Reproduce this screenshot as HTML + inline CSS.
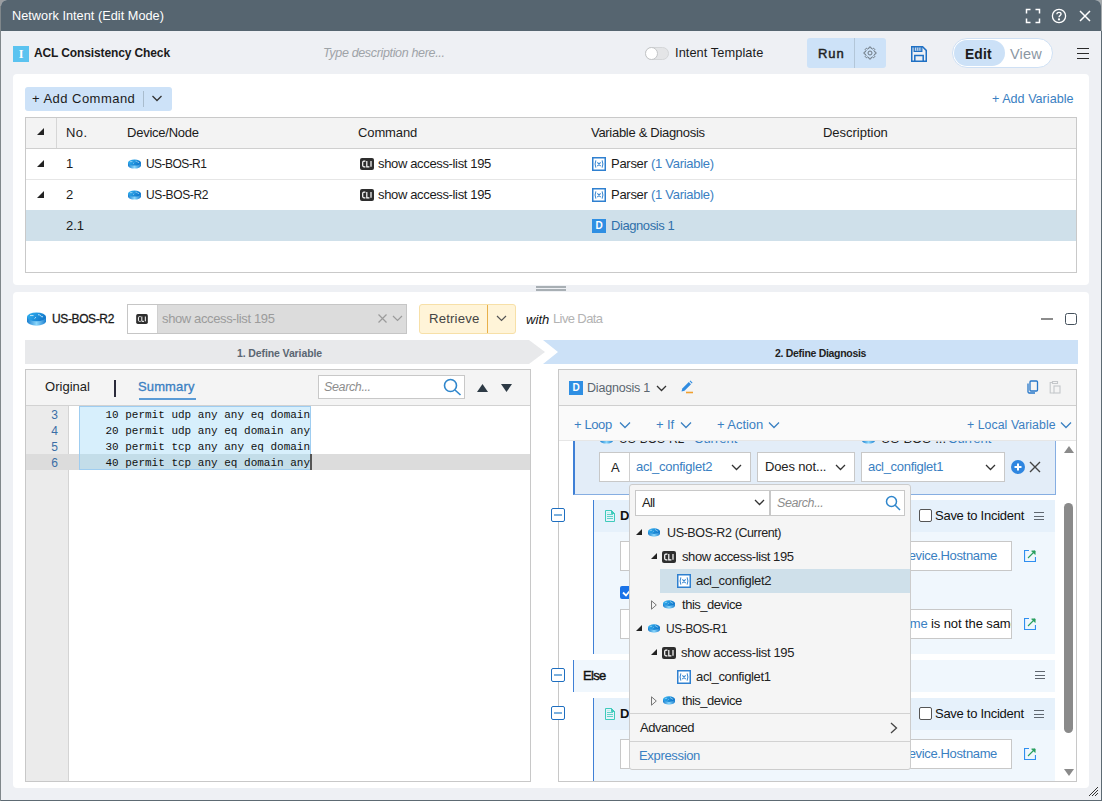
<!DOCTYPE html>
<html><head><meta charset="utf-8">
<style>
*{box-sizing:border-box;margin:0;padding:0}
html,body{width:1102px;height:801px;overflow:hidden;background:#5d6a73;font-family:"Liberation Sans",sans-serif;font-size:13px;color:#1b1b1b}
.a{position:absolute}
.t{position:absolute;white-space:nowrap;line-height:18px;font-size:13px}
#dlg{position:absolute;left:1px;top:0;width:1100px;height:800px;background:#eef0f4;border-radius:6px 6px 0 0;overflow:hidden}
#title{position:absolute;left:0;top:0;width:1100px;height:31px;background:#566570}
.blue{color:#3a80c2}
.tri{position:absolute;width:0;height:0;border-style:solid;border-width:0 0 7px 7px;border-color:transparent transparent #222 transparent}
.rtr{position:absolute;border-radius:50%/45%;background:radial-gradient(ellipse at 50% 30%,#8fd3fa 0,#3fa9ea 45%,#1d84cf 100%)}
.cli{position:absolute;width:14px;height:12px;background:#2f2f2f;border-radius:2px;color:#fff;font-size:7.5px;font-weight:bold;line-height:12px;text-align:center;letter-spacing:-0.3px}
.xic{position:absolute;width:14px;height:14px;border:1.5px solid #3182cf;color:#3182cf;font-size:8px;font-style:italic;line-height:11px;text-align:center;font-family:"Liberation Serif",serif}
.dic{position:absolute;width:14px;height:14px;background:#2f8fe3;color:#fff;font-size:10px;font-weight:bold;line-height:14px;text-align:center}
.btnb{position:absolute;background:#cde2f8;border-radius:3px}
</style></head><body>
<svg width="0" height="0" style="position:absolute">
  <defs>
    <linearGradient id="rgs" x1="0" x2="1" y1="0" y2="0"><stop offset="0" stop-color="#1a7fd0"/><stop offset="0.5" stop-color="#8ad6fb"/><stop offset="1" stop-color="#1a7fd0"/></linearGradient>
    <linearGradient id="rgt" x1="0" x2="1" y1="0" y2="0.4"><stop offset="0" stop-color="#35b6f3"/><stop offset="1" stop-color="#1279cc"/></linearGradient>
    <symbol id="rt" viewBox="0 0 19 13.5">
      <path d="M0 4.6V8.9A9.5 4.5 0 0 0 19 8.9V4.6Z" fill="url(#rgs)"/>
      <ellipse cx="9.5" cy="4.6" rx="9.5" ry="4.4" fill="url(#rgt)"/>
      <path d="M3 3.3H6.5M7.5 6.2L9 5M11 2.5H12.5L14.5 4.5H16" stroke="#cfeaf8" stroke-width="0.9" fill="none"/>
    </symbol>
<symbol id="cl" viewBox="0 0 14 12"><rect x="0" y="0" width="14" height="12" rx="2" fill="#2e2e2e"/><path d="M5.4 3.2H3.9Q2.7 3.2 2.7 4.4V7.6Q2.7 8.8 3.9 8.8H5.4M6.8 3V8.8H9.4M11 3V8.8" stroke="#fff" stroke-width="1.2" fill="none"/></symbol>
<symbol id="xv" viewBox="0 0 14 14"><rect x=".75" y=".75" width="12.5" height="12.5" fill="#fff" stroke="#2f80d0" stroke-width="1.5"/><path d="M3.9 3.4Q2.3 7 3.9 10.6M10.1 3.4Q11.7 7 10.1 10.6M5.4 5.3L8.6 9.1M8.6 5.3L5.4 9.1" stroke="#3a88d2" stroke-width="1.1" fill="none"/></symbol>
  </defs></svg>
<div class="a" style="left:0;top:0;width:1px;height:801px;background:#80878b"></div>
<div class="a" style="left:0;top:0;width:14px;height:6px;background:#9a9da0"></div>
<div class="a" style="left:1088px;top:0;width:14px;height:31px;background:#a3a9ac"></div>
<div id="dlg">
  <div id="title">
    <div id="t1" class="t" style="left:11px;top:7px;color:#fff;font-size:12.7px;letter-spacing:0.04px">Network Intent (Edit Mode)</div>
    <!-- fullscreen -->
    <svg class="a" style="left:1024px;top:8px" width="16" height="16" viewBox="0 0 16 16" fill="none" stroke="#fff" stroke-width="1.5">
      <path d="M1.5 5.5V1.5H5.5M10.5 1.5H14.5V5.5M14.5 10.5V14.5H10.5M5.5 14.5H1.5V10.5"/></svg>
    <!-- help -->
    <svg class="a" style="left:1050px;top:8px" width="16" height="16" viewBox="0 0 16 16" fill="none" stroke="#fff" stroke-width="1.3">
      <circle cx="8" cy="8" r="6.6"/><path d="M5.9 6.2C5.9 5 6.8 4.3 8 4.3 9.2 4.3 10.1 5 10.1 6.1 10.1 7.4 8 7.6 8 9.2"/><circle cx="8" cy="11.4" r="0.5" fill="#fff"/></svg>
    <!-- close -->
    <svg class="a" style="left:1078px;top:10px" width="12" height="12" viewBox="0 0 12 12" fill="none" stroke="#fff" stroke-width="1.5">
      <path d="M1 1L11 11M11 1L1 11"/></svg>
  </div>

  <!-- header row -->
  <div class="dic" style="left:12px;top:46px;width:16px;height:16px;background:#5bc3f0;font-family:'Liberation Serif',serif;font-size:12px;line-height:16px">I</div>
  <div id="t2" class="t" style="left:33px;top:44px;font-weight:bold;font-size:12px;letter-spacing:-0.12px">ACL Consistency Check</div>
  <div id="t3" class="t" style="left:322px;top:44px;font-style:italic;color:#9ea3a8;font-size:12.5px;letter-spacing:-0.34px">Type description here...</div>
  <div class="a" style="left:644px;top:47px;width:24px;height:13px;border-radius:7px;background:#e4e5e7;border:1px solid #d4d6d8"></div>
  <div class="a" style="left:644px;top:47px;width:13px;height:13px;border-radius:50%;background:#fff;border:1px solid #c3c5c7"></div>
  <div id="t4" class="t" style="left:674px;top:44px;font-size:12.8px;letter-spacing:0.07px">Intent Template</div>
  <div class="btnb" style="left:806px;top:38px;width:79px;height:30px"></div>
  <div class="a" style="left:853px;top:38px;width:1px;height:30px;background:#b3c6d8"></div>
  <div id="t5" class="t" style="left:817px;top:45px;font-weight:normal;-webkit-text-stroke:0.45px #222;font-size:13px;color:#222;letter-spacing:0.9px">Run</div>
  <svg class="a" style="left:861px;top:45px" width="16" height="16" viewBox="0 0 16 16" fill="none" stroke="#6b7680" stroke-width="1" stroke-linejoin="round"><path d="M12.34 6.20 L12.59 6.97 L13.94 7.15 L13.94 8.85 L12.59 9.03 L12.34 9.80 L11.97 10.52 L12.80 11.60 L11.60 12.80 L10.52 11.97 L9.80 12.34 L9.03 12.59 L8.85 13.94 L7.15 13.94 L6.97 12.59 L6.20 12.34 L5.48 11.97 L4.40 12.80 L3.20 11.60 L4.03 10.52 L3.66 9.80 L3.41 9.03 L2.06 8.85 L2.06 7.15 L3.41 6.97 L3.66 6.20 L4.03 5.48 L3.20 4.40 L4.40 3.20 L5.48 4.03 L6.20 3.66 L6.97 3.41 L7.15 2.06 L8.85 2.06 L9.03 3.41 L9.80 3.66 L10.52 4.03 L11.60 3.20 L12.80 4.40 L11.97 5.48Z"/><circle cx="8" cy="8" r="2"/></svg>
  <svg class="a" style="left:910px;top:46px" width="16" height="16" viewBox="0 0 16 16" fill="none" stroke="#1f70c4">
    <path d="M.75.75H11.6L15.25 4.4V15.25H.75Z" stroke-width="1.5"/><path d="M3.2 1V5.3H10.8V1" stroke-width="1.3"/><path d="M5.3 1.2V4.8M7.2 1.2V4.8M9.1 1.2V4.8" stroke-width="0.9"/><path d="M3.8 15V9.4H12.2V15" stroke-width="1.5"/></svg>
  <div class="a" style="left:951px;top:38px;width:101px;height:30px;border-radius:15px;background:#fff;border:1px solid #cfe0f4"></div>
  <div class="a" style="left:953px;top:40px;width:51px;height:26px;border-radius:13px;background:#cce1f7"></div>
  <div id="t6" class="t" style="left:964px;top:46px;font-weight:bold;font-size:13.8px;color:#1b1b1b;letter-spacing:0.14px">Edit</div>
  <div id="t7" class="t" style="left:1009px;top:45px;font-size:14.5px;color:#8b97a3;letter-spacing:0.17px">View</div>
  <div class="a" style="left:1076px;top:47.5px;width:12px;height:1.5px;background:#2a2a2a"></div>
  <div class="a" style="left:1076px;top:52.5px;width:12px;height:1.5px;background:#2a2a2a"></div>
  <div class="a" style="left:1076px;top:57.5px;width:12px;height:1.5px;background:#2a2a2a"></div>

  <!-- top panel -->
  <div class="a" style="left:12px;top:74px;width:1076px;height:211px;background:#fff;border-radius:4px"></div>
  <div class="btnb" style="left:24px;top:87px;width:147px;height:24px"></div>
  <div id="t8" class="t" style="left:31px;top:90px;font-size:13px;letter-spacing:0.47px">+ Add Command</div>
  <div class="a" style="left:142px;top:91px;width:1px;height:16px;background:#a9bccd"></div>
  <svg class="a" style="left:150px;top:94px" width="12" height="9" viewBox="0 0 12 9" fill="none" stroke="#333" stroke-width="1.3"><path d="M1.5 2L6 6.5 10.5 2"/></svg>
  <div id="t9" class="t blue" style="left:991px;top:90px;font-size:12.6px;letter-spacing:0.01px">+ Add Variable</div>

  <div id="tbl" class="a" style="left:24px;top:117px;width:1052px;height:156px;border:1px solid #c9c9c9;background:#fff">
    <div class="a" style="left:0;top:0;width:1050px;height:31px;background:#f3f3f3;border-bottom:1px solid #cfcfcf"></div>
    <div class="a" style="left:30px;top:0;width:1px;height:30px;background:#d6d6d6"></div>
    <div id="t10" class="tri" style="left:11px;top:10px"></div>
    <div id="t11" class="t" style="left:40px;top:6px;letter-spacing:0.4px">No.</div>
    <div id="t12" class="t" style="left:101px;top:6px;letter-spacing:-0.24px">Device/Node</div>
    <div id="t13" class="t" style="left:332px;top:6px;letter-spacing:-0.12px">Command</div>
    <div id="t14" class="t" style="left:565px;top:6px;letter-spacing:-0.3px">Variable &amp; Diagnosis</div>
    <div id="t15" class="t" style="left:797px;top:6px;letter-spacing:-0.02px">Description</div>
    <!-- row1 -->
    <div class="a" style="left:0;top:61px;width:1050px;height:1px;background:#e6e6e6"></div>
    <div id="t16" class="tri" style="left:11px;top:42px"></div>
    <div id="t17" class="t" style="left:40px;top:37px">1</div>
    <svg class="a" style="left:102px;top:41px" width="13" height="10"><use href="#rt"/></svg>
    <div id="t18" class="t" style="left:120px;top:37px;letter-spacing:-0.56px;font-size:12px">US-BOS-R1</div>
    <svg class="a" style="left:334px;top:40px" width="14" height="12"><use href="#cl"/></svg>
    <div id="t19" class="t" style="left:352px;top:37px;letter-spacing:-0.35px">show access-list 195</div>
    <svg class="a" style="left:566px;top:39px" width="14" height="14"><use href="#xv"/></svg>
    <div id="t20" class="t" style="left:585px;top:37px;letter-spacing:-0.28px">Parser <span class="blue">(1 Variable)</span></div>
    <!-- row2 -->
    <div id="t21" class="tri" style="left:11px;top:73px"></div>
    <div id="t22" class="t" style="left:40px;top:68px">2</div>
    <svg class="a" style="left:102px;top:72px" width="13" height="10"><use href="#rt"/></svg>
    <div id="t23" class="t" style="left:120px;top:68px;letter-spacing:-0.36px;font-size:12px">US-BOS-R2</div>
    <svg class="a" style="left:334px;top:71px" width="14" height="12"><use href="#cl"/></svg>
    <div id="t24" class="t" style="left:352px;top:68px;letter-spacing:-0.35px">show access-list 195</div>
    <svg class="a" style="left:566px;top:70px" width="14" height="14"><use href="#xv"/></svg>
    <div id="t25" class="t" style="left:585px;top:68px;letter-spacing:-0.28px">Parser <span class="blue">(1 Variable)</span></div>
    <!-- row 2.1 -->
    <div class="a" style="left:0;top:92px;width:1050px;height:31px;background:#cfe0ea"></div>
    <div id="t26" class="t" style="left:40px;top:99px">2.1</div>
    <div class="dic" style="left:566px;top:101px">D</div>
    <div id="t27" class="t" style="left:585px;top:99px;color:#2f70aa;letter-spacing:-0.42px">Diagnosis 1</div>
  </div>

  <!-- splitter -->
  <div class="a" style="left:535px;top:286px;width:30px;height:2px;background:#a8afb4"></div>
  <div class="a" style="left:535px;top:289px;width:30px;height:2px;background:#a8afb4"></div>

  <!-- bottom panel -->
  <div id="bp" class="a" style="left:12px;top:292px;width:1076px;height:496px;background:#fff;border-radius:4px 4px 4px 4px">
  </div>
  <!-- ===== bottom header ===== -->
  <svg class="a" style="left:26px;top:312px" width="19" height="14"><use href="#rt"/></svg>
  <div id="t28" class="t" style="left:51px;top:310px;font-size:12px;font-weight:normal;color:#1a1a1a;letter-spacing:-0.38px;-webkit-text-stroke:0.3px #1a1a1a">US-BOS-R2</div>
  <div class="a" style="left:126px;top:304px;width:280px;height:30px;border:1px solid #c6c6c6;background:#dcdcdc"></div>
  <div class="a" style="left:127px;top:305px;width:30px;height:28px;background:#fff;border-right:1px solid #d0d0d0"></div>
  <svg class="a" style="left:135px;top:314px" width="12" height="10"><use href="#cl"/></svg>
  <div id="t29" class="t" style="left:161px;top:310px;color:#9b9b9b;letter-spacing:-0.37px">show access-list 195</div>
  <svg class="a" style="left:376px;top:313px" width="11" height="11" viewBox="0 0 11 11" fill="none" stroke="#9b9b9b" stroke-width="1.2"><path d="M1.5 1.5L9.5 9.5M9.5 1.5L1.5 9.5"/></svg>
  <svg class="a" style="left:391px;top:315px" width="11" height="7" viewBox="0 0 11 7" fill="none" stroke="#9b9b9b" stroke-width="1.2"><path d="M1 1L5.5 5.5 10 1"/></svg>
  <div class="a" style="left:418px;top:304px;width:97px;height:30px;border:1px solid #f7e0a8;background:#fff4d8;border-radius:3px"></div>
  <div class="a" style="left:486px;top:305px;width:1px;height:28px;background:#e8b04a"></div>
  <div id="t30" class="t" style="left:428px;top:310px;color:#444;font-size:13.2px;letter-spacing:0.16px">Retrieve</div>
  <svg class="a" style="left:495px;top:315px" width="11" height="7" viewBox="0 0 11 7" fill="none" stroke="#555" stroke-width="1.2"><path d="M1 1L5.5 5.5 10 1"/></svg>
  <div id="t31" class="t" style="left:525px;top:311px;font-style:italic;color:#111;letter-spacing:0.06px">with</div>
  <div id="t32" class="t" style="left:552px;top:310px;color:#b3b3b3;letter-spacing:-0.62px">Live Data</div>
  <div class="a" style="left:1040px;top:318px;width:12px;height:2px;background:#8c8c8c"></div>
  <div class="a" style="left:1064px;top:313px;width:12px;height:12px;border:1.5px solid #45515c;border-radius:2.5px"></div>

  <!-- step bar -->
  <svg class="a" style="left:24px;top:340px" width="1053" height="24" viewBox="0 0 1053 24">
    <path d="M0 0H504L520 12 504 24H0Z" fill="#e8e9eb"/>
    <path d="M518 0H1053V24H518L533 12Z" fill="#cce1f7"/>
  </svg>
  <div id="t33" class="t" style="left:236px;top:344px;font-size:10.5px;font-weight:bold;color:#5b6672;letter-spacing:-0.11px">1. Define Variable</div>
  <div id="t34" class="t" style="left:774px;top:344px;font-size:10.5px;font-weight:bold;color:#222;letter-spacing:-0.3px">2. Define Diagnosis</div>

  <!-- ===== left editor ===== -->
  <div class="a" style="left:24px;top:369px;width:506px;height:413px;border:1px solid #c8c8c8;background:#fff"></div>
  <div class="a" style="left:25px;top:370px;width:504px;height:36px;background:#f4f4f4;border-bottom:1px solid #d2d2d2"></div>
  <div id="t35" class="t" style="left:44px;top:378px;letter-spacing:0.02px">Original</div>
  <div class="a" style="left:113px;top:380px;width:1.6px;height:17px;background:#2a2a3a"></div>
  <div id="t36" class="t" style="left:137px;top:378px;color:#3a80c2;letter-spacing:0.13px;-webkit-text-stroke:0.3px #3a80c2">Summary</div>
  <div class="a" style="left:138px;top:398px;width:57px;height:2px;background:#5b9bd5"></div>
  <div class="a" style="left:317px;top:375px;width:147px;height:24px;border:1px solid #c8c8c8;background:#fff"></div>
  <div id="t37" class="t" style="left:323px;top:378px;font-style:italic;color:#8d8d8d;font-size:12.5px;letter-spacing:-0.37px">Search...</div>
  <svg class="a" style="left:442px;top:378px" width="19" height="18" viewBox="0 0 19 18" fill="none" stroke="#2f86cc" stroke-width="1.6"><circle cx="7.5" cy="7.5" r="6"/><path d="M12 12L17.5 17"/></svg>
  <svg class="a" style="left:476px;top:384px" width="11" height="8" viewBox="0 0 11 8"><path d="M0 8L5.5 0 11 8Z" fill="#2d3a45"/></svg>
  <svg class="a" style="left:500px;top:384px" width="11" height="8" viewBox="0 0 11 8"><path d="M0 0H11L5.5 8Z" fill="#2d3a45"/></svg>
  <!-- gutter -->
  <div class="a" style="left:25px;top:406px;width:43px;height:375px;background:#ebebeb;border-right:1px solid #d4d4d4"></div>
  <div class="a" style="left:25px;top:454px;width:504px;height:16px;background:#dcdcdc"></div>
  <div class="a" style="left:78px;top:406px;width:232px;height:64px;background:#d7effc;border:1px solid #9fcdf0"></div>
  <div class="a" style="left:79px;top:454px;width:230px;height:15px;background:#c3dde9"></div>
  <div class="a" style="left:309px;top:454px;width:2px;height:16px;background:#555"></div>
  <div class="a" style="left:25px;top:407px;width:32px;font-family:'Liberation Sans',sans-serif;font-size:12px;line-height:16px;color:#3a6ea6;text-align:right">3<br>4<br>5<br>6</div>
  <div class="a" style="left:78px;top:407px;font-family:'Liberation Mono',monospace;font-size:11px;line-height:16px;color:#111;white-space:pre">    10 permit udp any any eq domain
    20 permit udp any eq domain any
    30 permit tcp any any eq domain
    40 permit tcp any eq domain any</div>

  <!-- ===== right panel ===== -->
  <div class="a" style="left:557px;top:369px;width:519px;height:413px;border:1px solid #c8c8c8;background:#fff"></div>
  <!-- scroll content (clipped) -->
  <div id="sc" class="a" style="left:558px;top:441px;width:517px;height:340px;overflow:hidden;background:#fff">
    <!-- coordinates inside: page x - 559, page y - 441 -->
    <!-- condition block -->
    <div class="a" style="left:14px;top:-40px;width:483px;height:94px;background:#e3edf8;border-left:2px solid #3f80d6;border-right:1px solid #86aee2;border-bottom:1px solid #86aee2"></div>
    <svg class="a" style="left:41px;top:-7px" width="13" height="10"><use href="#rt"/></svg>
    <div id="t38" class="t" style="left:60px;top:-11px;color:#222;font-size:12px">US-BOS-R2</div>
    <div id="t39" class="t" style="left:122px;top:-11px;color:#222">-</div>
    <div id="t40" class="t" style="left:135px;top:-11px;color:#3a80c2">Current</div>
    <svg class="a" style="left:303px;top:-7px" width="13" height="10"><use href="#rt"/></svg>
    <div id="t41" class="t" style="left:322px;top:-11px;color:#222">US-BOS-...</div>
    <div id="t42" class="t" style="left:379px;top:-11px;color:#222">-</div>
    <div id="t43" class="t" style="left:389px;top:-11px;color:#3a80c2">Current</div>
    <div class="a" style="left:40px;top:11px;width:152px;height:30px;border:1px solid #c8c8c8;background:#fff"></div>
    <div class="a" style="left:70px;top:12px;width:1px;height:28px;background:#d0d0d0"></div>
    <div id="t44" class="t" style="left:52px;top:18px;color:#222">A</div>
    <div id="t45" class="t" style="left:77px;top:17px;color:#3a80c2;letter-spacing:-0.23px">acl_configlet2</div>
    <svg class="a" style="left:172px;top:23px" width="11" height="7" viewBox="0 0 11 7" fill="none" stroke="#333" stroke-width="1.3"><path d="M1 1L5.5 5.5 10 1"/></svg>
    <div class="a" style="left:198px;top:11px;width:98px;height:30px;border:1px solid #c8c8c8;background:#fff"></div>
    <div id="t46" class="t" style="left:206px;top:17px;color:#222;letter-spacing:-0.14px">Does not...</div>
    <svg class="a" style="left:276px;top:23px" width="11" height="7" viewBox="0 0 11 7" fill="none" stroke="#333" stroke-width="1.3"><path d="M1 1L5.5 5.5 10 1"/></svg>
    <div class="a" style="left:302px;top:11px;width:144px;height:30px;border:1px solid #c8c8c8;background:#fff"></div>
    <div id="t47" class="t" style="left:309px;top:17px;color:#3a80c2;letter-spacing:-0.31px">acl_configlet1</div>
    <svg class="a" style="left:426px;top:23px" width="11" height="7" viewBox="0 0 11 7" fill="none" stroke="#333" stroke-width="1.3"><path d="M1 1L5.5 5.5 10 1"/></svg>
    <svg class="a" style="left:452px;top:19px" width="14" height="14" viewBox="0 0 14 14"><circle cx="7" cy="7" r="7" fill="#2f86e0"/><path d="M7 3.5V10.5M3.5 7H10.5" stroke="#fff" stroke-width="2"/></svg>
    <svg class="a" style="left:470px;top:20px" width="12" height="12" viewBox="0 0 12 12" fill="none" stroke="#444" stroke-width="1.4"><path d="M1 1L11 11M11 1L1 11"/></svg>

    <!-- action block 1 -->
    <div class="a" style="left:34px;top:59px;width:462px;height:154px;background:#f0f7fd;border-left:1px solid #3f80d6"></div>
    <div class="a" style="left:35px;top:59px;width:461px;height:32px;background:#e6f1fb"></div>
    <svg class="a" style="left:46px;top:69px" width="10" height="12" viewBox="0 0 10 12" fill="none" stroke="#3ecbbb" stroke-width="1"><path d="M.5.5H6.5L9.5 3.5V11.5H.5Z"/><path d="M6.5.5V3.5H9.5Z" fill="#3ecbbb"/><path d="M2 4.5H8M2 6.5H8M2 8.5H8" stroke="#5fd3c6"/><path d="M2 2.5H5" stroke="#bfeee8"/></svg>
    <div id="t48" class="t" style="left:61px;top:66px;font-weight:bold;color:#111">Define</div>
    <div class="a" style="left:360px;top:68px;width:13px;height:13px;border:1px solid #555;border-radius:2px;background:#fff"></div>
    <div id="t49" class="t" style="left:376px;top:66px;color:#111;letter-spacing:-0.26px">Save to Incident</div>
    <div class="a" style="left:475px;top:71px;width:10px;height:1.2px;background:#5f6770"></div>
    <div class="a" style="left:475px;top:74.5px;width:10px;height:1.2px;background:#5f6770"></div>
    <div class="a" style="left:475px;top:78px;width:10px;height:1.2px;background:#5f6770"></div>
    <div class="a" style="left:61px;top:100px;width:392px;height:30px;border:1px solid #c8c8c8;background:#fff;overflow:hidden">
      <div id="t50" class="t" style="right:14px;top:5px;color:#3a80c2;letter-spacing:-0.35px">$this_device.Hostname</div>
    </div>
    <svg class="a" style="left:465px;top:109px" width="12" height="12" viewBox="0 0 12 12" fill="none" stroke-width="1.1"><path d="M5 .55H.55V11.45H11.45V7" stroke="#2f8ff0"/><path d="M4 8L11 1" stroke="#2aa05f"/><path d="M7.6.9H11.1V4.4Z" fill="#2aa05f" stroke="#2aa05f" stroke-width="0.8"/></svg>
    <div class="a" style="left:61px;top:145px;width:13px;height:13px;border-radius:2px;background:#1a73e8"></div>
    <svg class="a" style="left:63px;top:147px" width="10" height="9" viewBox="0 0 10 9" fill="none" stroke="#fff" stroke-width="1.8"><path d="M1 4.5L4 7.5 9 1.5"/></svg>
    <div class="a" style="left:61px;top:168px;width:392px;height:30px;border:1px solid #c8c8c8;background:#fff;overflow:hidden">
      <div id="t51" class="t" style="left:221px;top:5px;color:#111;letter-spacing:-0.1px"><span style="color:#3a80c2">$R1.Hostname</span> is not the same as</div>
    </div>
    <svg class="a" style="left:465px;top:177px" width="12" height="12" viewBox="0 0 12 12" fill="none" stroke-width="1.1"><path d="M5 .55H.55V11.45H11.45V7" stroke="#2f8ff0"/><path d="M4 8L11 1" stroke="#2aa05f"/><path d="M7.6.9H11.1V4.4Z" fill="#2aa05f" stroke="#2aa05f" stroke-width="0.8"/></svg>

    <!-- else -->
    <div class="a" style="left:14px;top:219px;width:482px;height:32px;background:#f0f7fd;border-left:1px solid #3f80d6"></div>
    <div id="t52" class="t" style="left:24px;top:226px;font-weight:normal;-webkit-text-stroke:0.4px #111;color:#111;letter-spacing:-0.67px">Else</div>
    <div class="a" style="left:476px;top:230px;width:10px;height:1.2px;background:#5f6770"></div>
    <div class="a" style="left:476px;top:233.5px;width:10px;height:1.2px;background:#5f6770"></div>
    <div class="a" style="left:476px;top:237px;width:10px;height:1.2px;background:#5f6770"></div>

    <!-- action block 2 -->
    <div class="a" style="left:34px;top:257px;width:462px;height:100px;background:#f0f7fd;border-left:1px solid #3f80d6"></div>
    <div class="a" style="left:35px;top:257px;width:461px;height:32px;background:#e6f1fb"></div>
    <svg class="a" style="left:46px;top:267px" width="10" height="12" viewBox="0 0 10 12" fill="none" stroke="#3ecbbb" stroke-width="1"><path d="M.5.5H6.5L9.5 3.5V11.5H.5Z"/><path d="M6.5.5V3.5H9.5Z" fill="#3ecbbb"/><path d="M2 4.5H8M2 6.5H8M2 8.5H8" stroke="#5fd3c6"/><path d="M2 2.5H5" stroke="#bfeee8"/></svg>
    <div id="t53" class="t" style="left:61px;top:264px;font-weight:bold;color:#111">Define</div>
    <div class="a" style="left:360px;top:266px;width:13px;height:13px;border:1px solid #555;border-radius:2px;background:#fff"></div>
    <div id="t54" class="t" style="left:376px;top:264px;color:#111;letter-spacing:-0.28px">Save to Incident</div>
    <div class="a" style="left:475px;top:269px;width:10px;height:1.2px;background:#5f6770"></div>
    <div class="a" style="left:475px;top:272.5px;width:10px;height:1.2px;background:#5f6770"></div>
    <div class="a" style="left:475px;top:276px;width:10px;height:1.2px;background:#5f6770"></div>
    <div class="a" style="left:61px;top:298px;width:392px;height:30px;border:1px solid #c8c8c8;background:#fff;overflow:hidden">
      <div id="t55" class="t" style="right:14px;top:5px;color:#3a80c2;letter-spacing:-0.35px">$this_device.Hostname</div>
    </div>
    <svg class="a" style="left:465px;top:307px" width="12" height="12" viewBox="0 0 12 12" fill="none" stroke-width="1.1"><path d="M5 .55H.55V11.45H11.45V7" stroke="#2f8ff0"/><path d="M4 8L11 1" stroke="#2aa05f"/><path d="M7.6.9H11.1V4.4Z" fill="#2aa05f" stroke="#2aa05f" stroke-width="0.8"/></svg>

    <!-- scrollbar -->
    <div class="a" style="left:497px;top:0;width:20px;height:340px;background:#fff"></div>
    <svg class="a" style="left:505px;top:5px" width="10" height="7" viewBox="0 0 10 7"><path d="M0 7L5 0 10 7Z" fill="#8a8a8a"/></svg>
    <div class="a" style="left:505px;top:62px;width:9px;height:230px;border-radius:5px;background:#8a8a8a"></div>
    <svg class="a" style="left:505px;top:328px" width="10" height="7" viewBox="0 0 10 7"><path d="M0 0H10L5 7Z" fill="#8a8a8a"/></svg>
  </div>
  <!-- tree line + collapse buttons -->
  <div class="a" style="left:550px;top:508px;width:14px;height:14px;border:1px solid #1f6fc0;border-radius:2px;background:#fff"></div>
  <div class="a" style="left:553px;top:514px;width:8px;height:2px;background:#7ab0de"></div>
  <div class="a" style="left:550px;top:668px;width:14px;height:14px;border:1px solid #1f6fc0;border-radius:2px;background:#fff"></div>
  <div class="a" style="left:553px;top:674px;width:8px;height:2px;background:#7ab0de"></div>
  <div class="a" style="left:550px;top:706px;width:14px;height:14px;border:1px solid #1f6fc0;border-radius:2px;background:#fff"></div>
  <div class="a" style="left:553px;top:712px;width:8px;height:2px;background:#7ab0de"></div>

  <!-- right header -->
  <div class="a" style="left:558px;top:370px;width:517px;height:36px;background:#f4f4f4;border-bottom:1px solid #cfcfcf"></div>
  <div class="dic" style="left:568px;top:381px">D</div>
  <div id="t56" class="t" style="left:586px;top:379px;color:#5b6670;font-size:12.5px;letter-spacing:-0.2px">Diagnosis 1</div>
  <svg class="a" style="left:655px;top:385px" width="11" height="7" viewBox="0 0 11 7" fill="none" stroke="#333" stroke-width="1.3"><path d="M1 1L5.5 5.5 10 1"/></svg>
  <svg class="a" style="left:679px;top:380px" width="14" height="14" viewBox="0 0 14 14"><path d="M1.5 11.5L2.3 8.6 8.8 2.1 11 4.3 4.5 10.8Z" fill="#2f8be0"/><path d="M9.6 1.3L10.4.5 12.6 2.7 11.8 3.5Z" fill="#2f8be0"/><path d="M6 12.5H13" stroke="#f0a030" stroke-width="1.6"/></svg>
  <svg class="a" style="left:1025px;top:380px" width="13" height="14" viewBox="0 0 13 14" fill="none" stroke="#2777c9" stroke-width="1.3"><rect x="4" y="1" width="7.5" height="10" rx="1"/><path d="M2 3.5V12A1.2 1.2 0 0 0 3.2 13H9"/></svg>
  <svg class="a" style="left:1048px;top:380px" width="12" height="14" viewBox="0 0 12 14" fill="none" stroke="#c4c7ca" stroke-width="1.1"><path d="M3 2.5H1.2V13H5"/><path d="M3.5 1.5H8.5V3.5H3.5Z"/><rect x="5" y="6" width="6" height="7"/></svg>
  <!-- toolbar -->
  <div class="a" style="left:558px;top:406px;width:517px;height:35px;background:#fafafa;border-bottom:1px solid #e6e6e6"></div>
  <div id="t57" class="t blue" style="left:573px;top:416px;letter-spacing:-0.4px">+ Loop</div>
  <svg class="a" style="left:618px;top:421px" width="12" height="8" viewBox="0 0 12 8" fill="none" stroke="#3a80c2" stroke-width="1.3"><path d="M1 1.5L6 6.5 11 1.5"/></svg>
  <div id="t58" class="t blue" style="left:655px;top:416px;letter-spacing:-0.14px">+ If</div>
  <svg class="a" style="left:679px;top:421px" width="12" height="8" viewBox="0 0 12 8" fill="none" stroke="#3a80c2" stroke-width="1.3"><path d="M1 1.5L6 6.5 11 1.5"/></svg>
  <div id="t59" class="t blue" style="left:716px;top:416px;letter-spacing:-0.06px">+ Action</div>
  <svg class="a" style="left:767px;top:421px" width="12" height="8" viewBox="0 0 12 8" fill="none" stroke="#3a80c2" stroke-width="1.3"><path d="M1 1.5L6 6.5 11 1.5"/></svg>
  <div id="t60" class="t blue" style="left:966px;top:416px;font-size:12.3px;letter-spacing:0.06px">+ Local Variable</div>
  <svg class="a" style="left:1059px;top:421px" width="12" height="8" viewBox="0 0 12 8" fill="none" stroke="#3a80c2" stroke-width="1.3"><path d="M1 1.5L6 6.5 11 1.5"/></svg>

  <!-- ===== popup ===== -->
  <div class="a" style="left:628px;top:484px;width:282px;height:286px;background:#f5f5f5;border:1px solid #cccccc;border-radius:3px"></div>
  <div class="a" style="left:634px;top:490px;width:135px;height:26px;border:1px solid #c8c8c8;background:#fff"></div>
  <div id="t61" class="t" style="left:641px;top:494px;color:#222;letter-spacing:-0.6px">All</div>
  <svg class="a" style="left:753px;top:499px" width="11" height="7" viewBox="0 0 11 7" fill="none" stroke="#333" stroke-width="1.3"><path d="M1 1L5.5 5.5 10 1"/></svg>
  <div class="a" style="left:769px;top:490px;width:135px;height:26px;border:1px solid #c8c8c8;background:#fff"></div>
  <div id="t62" class="t" style="left:776px;top:494px;font-style:italic;color:#8d8d8d;font-size:12.5px;letter-spacing:-0.41px">Search...</div>
  <svg class="a" style="left:884px;top:495px" width="16" height="16" viewBox="0 0 16 16" fill="none" stroke="#2f86cc" stroke-width="1.5"><circle cx="6.5" cy="6.5" r="5"/><path d="M10.2 10.2L15 15"/></svg>
  <!-- tree -->
  <div class="a" style="left:659px;top:569px;width:250px;height:24px;background:#cfe0ea"></div>
  <div id="t63" class="tri" style="left:635px;top:529px;border-width:0 0 6px 6px"></div>
  <svg class="a" style="left:647px;top:528px" width="12" height="9"><use href="#rt"/></svg>
  <div id="t64" class="t" style="left:666px;top:524px;color:#222;letter-spacing:-0.39px;font-size:12.5px">US-BOS-R2 (Current)</div>
  <div id="t65" class="tri" style="left:650px;top:553px;border-width:0 0 6px 6px"></div>
  <svg class="a" style="left:661px;top:551px" width="14" height="12"><use href="#cl"/></svg>
  <div id="t66" class="t" style="left:681px;top:548px;color:#222;letter-spacing:-0.42px">show access-list 195</div>
  <svg class="a" style="left:676px;top:574px" width="14" height="14"><use href="#xv"/></svg>
  <div id="t67" class="t" style="left:695px;top:572px;color:#222;letter-spacing:-0.31px">acl_configlet2</div>
  <svg class="a" style="left:650px;top:600px" width="6" height="10" viewBox="0 0 6 10"><path d="M.5.8L5.3 5 .5 9.2Z" fill="none" stroke="#777" stroke-width="1"/></svg>
  <svg class="a" style="left:662px;top:600px" width="12" height="9"><use href="#rt"/></svg>
  <div id="t68" class="t" style="left:681px;top:596px;color:#222;letter-spacing:-0.48px">this_device</div>
  <div id="t69" class="tri" style="left:635px;top:625px;border-width:0 0 6px 6px"></div>
  <svg class="a" style="left:647px;top:624px" width="12" height="9"><use href="#rt"/></svg>
  <div id="t70" class="t" style="left:665px;top:620px;color:#222;letter-spacing:-0.5px;font-size:12px">US-BOS-R1</div>
  <div id="t71" class="tri" style="left:650px;top:649px;border-width:0 0 6px 6px"></div>
  <svg class="a" style="left:661px;top:647px" width="14" height="12"><use href="#cl"/></svg>
  <div id="t72" class="t" style="left:680px;top:644px;color:#222;letter-spacing:-0.34px">show access-list 195</div>
  <svg class="a" style="left:676px;top:670px" width="14" height="14"><use href="#xv"/></svg>
  <div id="t73" class="t" style="left:695px;top:668px;color:#222;letter-spacing:-0.35px">acl_configlet1</div>
  <svg class="a" style="left:650px;top:696px" width="6" height="10" viewBox="0 0 6 10"><path d="M.5.8L5.3 5 .5 9.2Z" fill="none" stroke="#777" stroke-width="1"/></svg>
  <svg class="a" style="left:662px;top:696px" width="12" height="9"><use href="#rt"/></svg>
  <div id="t74" class="t" style="left:681px;top:692px;color:#222;letter-spacing:-0.48px">this_device</div>
  <div class="a" style="left:629px;top:713px;width:280px;height:1px;background:#d2d2d2"></div>
  <div id="t75" class="t" style="left:639px;top:719px;color:#222;letter-spacing:-0.47px">Advanced</div>
  <svg class="a" style="left:889px;top:722px" width="8" height="12" viewBox="0 0 8 12" fill="none" stroke="#444" stroke-width="1.3"><path d="M1 1L6.5 6 1 11"/></svg>
  <div class="a" style="left:629px;top:741px;width:280px;height:1px;background:#d2d2d2"></div>
  <div id="t76" class="t" style="left:638px;top:747px;color:#3a80c2;letter-spacing:-0.33px">Expression</div>


<svg class="a" style="left:1088px;top:787px" width="9" height="9" viewBox="0 0 9 9" fill="#333"><rect x="0" y="8" width="1" height="1"/><rect x="1" y="7" width="1" height="1"/><rect x="2" y="6" width="1" height="1"/><rect x="3" y="5" width="1" height="1"/><rect x="3" y="8" width="1" height="1"/><rect x="4" y="4" width="1" height="1"/><rect x="4" y="7" width="1" height="1"/><rect x="5" y="3" width="1" height="1"/><rect x="5" y="6" width="1" height="1"/><rect x="6" y="2" width="1" height="1"/><rect x="6" y="5" width="1" height="1"/><rect x="6" y="8" width="1" height="1"/><rect x="7" y="1" width="1" height="1"/><rect x="7" y="4" width="1" height="1"/><rect x="7" y="7" width="1" height="1"/><rect x="8" y="0" width="1" height="1"/><rect x="8" y="3" width="1" height="1"/><rect x="8" y="6" width="1" height="1"/></svg>
</div>
</body></html>
